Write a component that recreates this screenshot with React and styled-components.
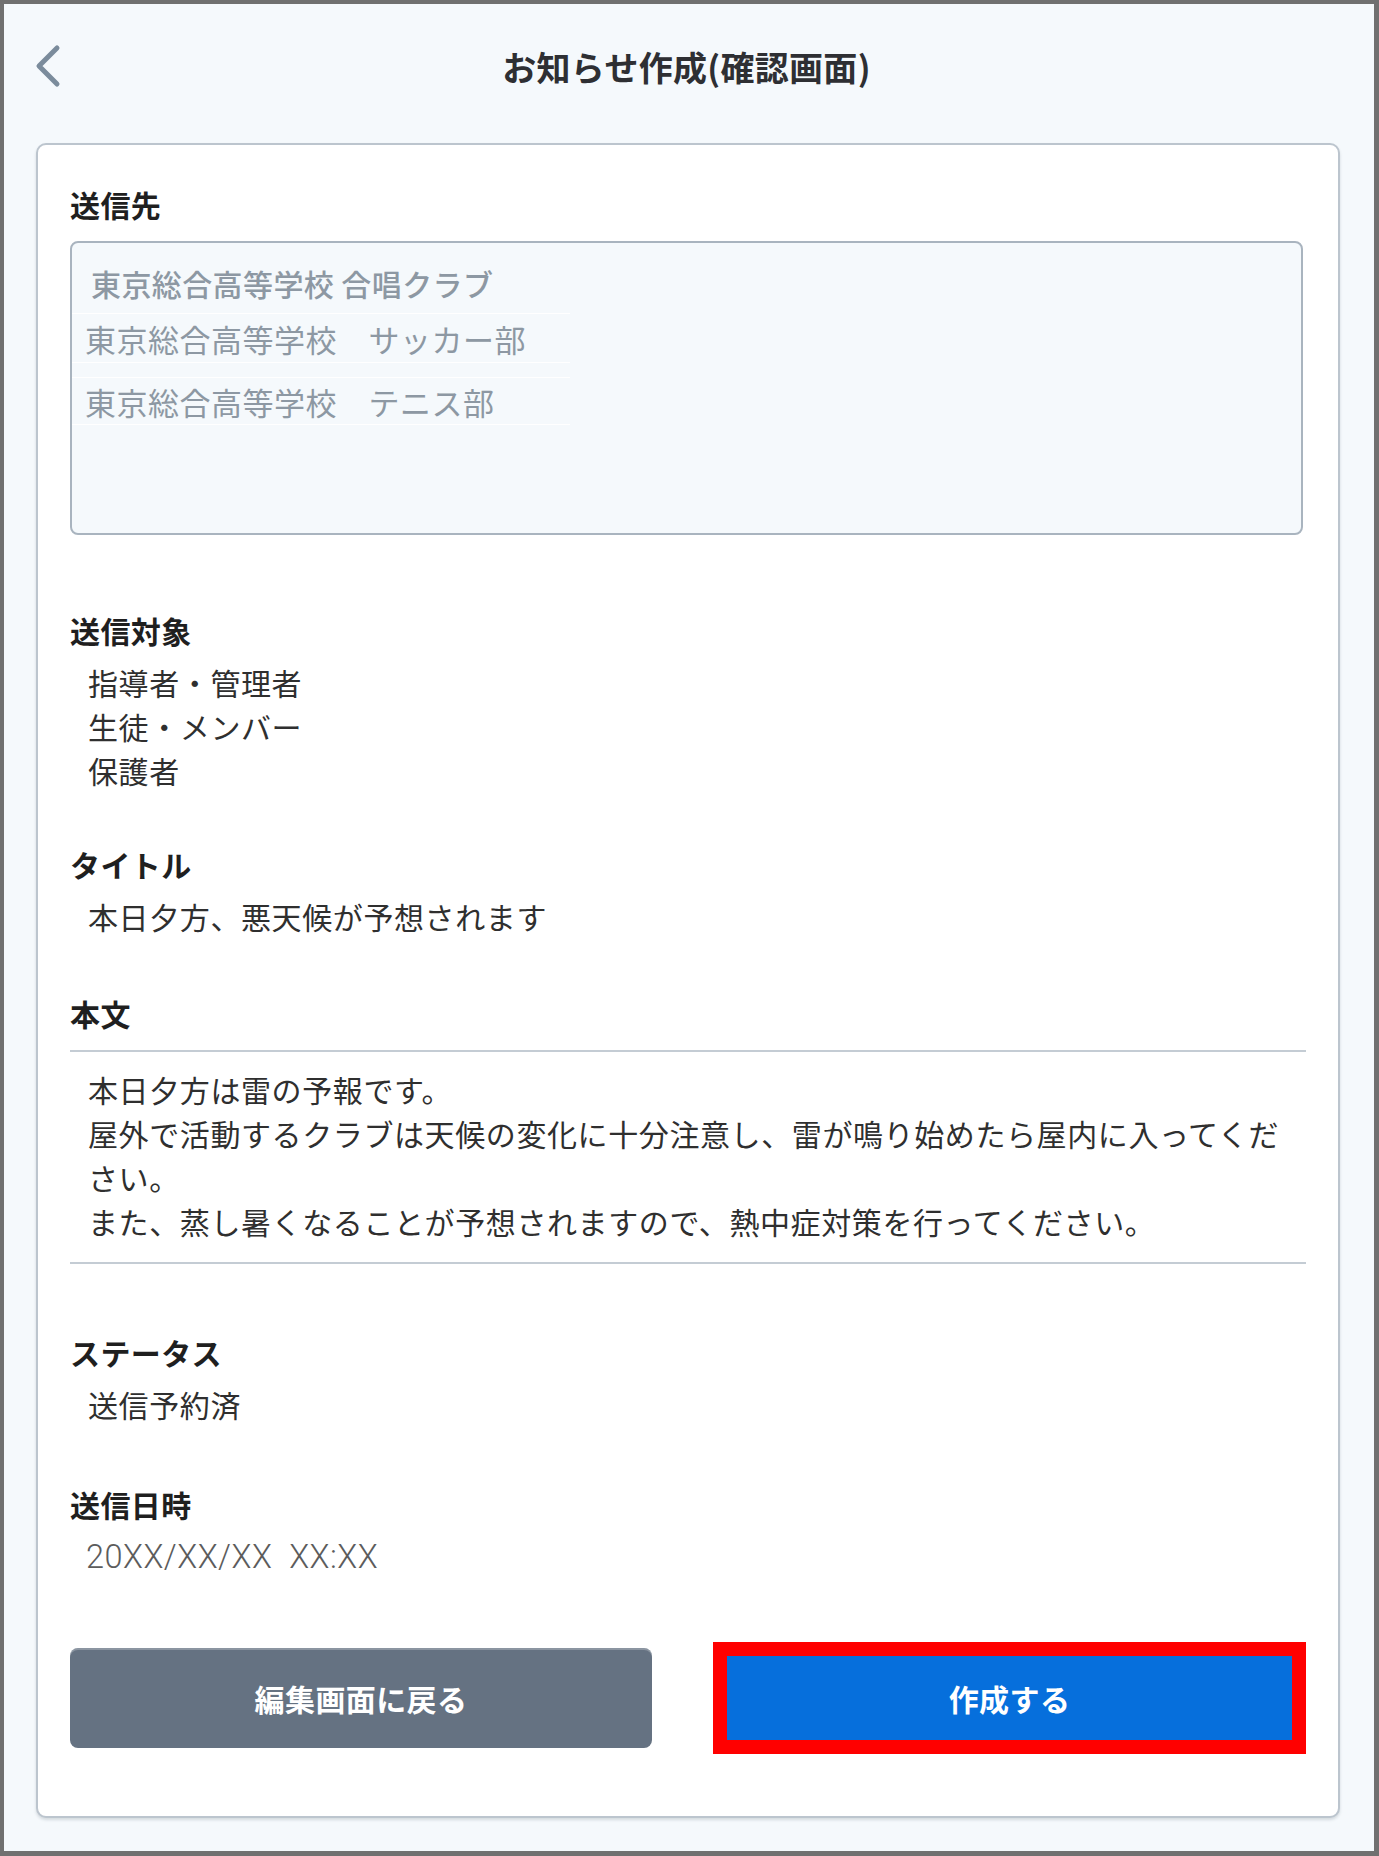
import React from "react";
import styled, { createGlobalStyle } from "styled-components";

const Global = createGlobalStyle`
  * { box-sizing: border-box; }
  html, body { margin: 0; padding: 0; background: #f5f9fc; }
  body {
    font-family: "Noto Sans CJK JP", "Noto Sans", sans-serif;
    color: #333;
  }
`;

const Frame = styled.div`
  width: 1379px;
  height: 1856px;
  border: 4px solid #707070;
  border-right-width: 5px;
  border-bottom-width: 5px;
  background: #f5f9fc;
  padding: 0 34px 0 32px;
  display: flex;
  flex-direction: column;
`;

const Header = styled.header`
  height: 124px;
  display: grid;
  grid-template-columns: 60px 1fr 60px;
  align-items: center;
  margin-left: -3px;
`;

const BackButton = styled.button`
  width: 40px;
  height: 44px;
  padding: 0;
  border: 0;
  background: transparent;
  display: flex;
  align-items: center;
  cursor: pointer;
`;

const Title = styled.h1`
  margin: 0;
  text-align: center;
  font-size: 34px;
  font-weight: 700;
  color: #2e2f33;
  letter-spacing: 0.3px;
`;

const Card = styled.main`
  margin-top: 15px;
  background: #fff;
  border: 2px solid #bcc5ce;
  border-radius: 10px;
  box-shadow: 0 2px 3px rgba(60, 75, 90, 0.18);
  padding: 37px 32px 62px 32px;
  display: flex;
  flex-direction: column;
`;

const Section = styled.section`
  margin-top: ${(p) => p.$gap || 0}px;
  display: flex;
  flex-direction: column;
`;

const Label = styled.h2`
  margin: 0;
  font-size: 30px;
  line-height: 44px;
  font-weight: 700;
  color: #1f1f1f;
  letter-spacing: 0.4px;
`;

const Value = styled.div`
  padding-left: 18px;
  font-size: 30px;
  line-height: 44px;
  letter-spacing: 0.6px;
  color: #2f2f2f;
  margin-top: ${(p) => p.$top ?? 8}px;
  white-space: pre-wrap;
`;

const DateValue = styled(Value)`
  font-family: Roboto, "Noto Sans", sans-serif;
  font-weight: 300;
  font-size: 32.5px;
  color: #5c5c5c;
  padding-left: 16px;
  letter-spacing: 0.5px;
`;

const RecipientBox = styled.div`
  margin-top: 15px;
  margin-right: 3px;
  height: 294px;
  background: #f5f9fc;
  border: 2px solid #a9b4bf;
  border-radius: 8px;
  padding-top: 18px;
  display: flex;
  flex-direction: column;
`;

const RecipientItem = styled.div`
  width: 498px;
  color: #8d98a3;
  display: flex;
  align-items: center;
  white-space: pre;
  margin-top: ${(p) => p.$top || 0}px;
  height: ${(p) => p.$h}px;
  padding-left: ${(p) => (p.$first ? 19 : 13)}px;
  font-size: ${(p) => (p.$first ? 30 : 31)}px;
  letter-spacing: ${(p) => (p.$first ? 0.4 : 0.5)}px;
  font-weight: ${(p) => (p.$first ? 500 : 400)};
  border-top: ${(p) => (p.$first ? "none" : "1px solid #ffffff")};
  border-bottom: ${(p) => (p.$first ? "none" : "1px solid #ffffff")};
`;

const Divider = styled.hr`
  margin: ${(p) => p.$top}px 0 0 0;
  border: 0;
  height: 2px;
  background: #c4ccd4;
`;

const Body = styled.div`
  padding-left: 18px;
  padding-right: 16px;
  margin-top: 15px;
  font-size: 30px;
  line-height: 44px;
  letter-spacing: 0.6px;
  color: #2f2f2f;
`;

const Line = styled.div``;

const ButtonRow = styled.div`
  margin-top: 63px;
  display: flex;
  align-items: center;
  justify-content: space-between;
`;

const BaseButton = styled.button`
  border: 0;
  color: #fff;
  font-family: "Noto Sans CJK JP", "Noto Sans", sans-serif;
  font-size: 30px;
  font-weight: 700;
  letter-spacing: 0.4px;
  cursor: pointer;
  display: flex;
  align-items: center;
  justify-content: center;
`;

const BackEditButton = styled(BaseButton)`
  width: 582px;
  height: 100px;
  background: #657282;
  border-radius: 8px;
  box-shadow: inset 0 2px 0 rgba(255, 255, 255, 0.25);
`;

const Highlight = styled.div`
  border: 14px solid #ff0000;
  width: 593px;
  height: 112px;
`;

const CreateButton = styled(BaseButton)`
  width: 100%;
  height: 100%;
  background: #066fdc;
`;

const ChevronLeft = () => (
  <svg width="30" height="44" viewBox="0 0 30 44" fill="none">
    <path
      d="M24 4 L6 22 L24 40"
      stroke="#7b8c9c"
      strokeWidth="5"
      strokeLinecap="round"
      strokeLinejoin="round"
    />
  </svg>
);

export default function App() {
  return (
    <>
      <Global />
      <Frame>
        <Header>
          <BackButton aria-label="戻る">
            <ChevronLeft />
          </BackButton>
          <Title>お知らせ作成(確認画面)</Title>
          <span />
        </Header>

        <Card>
          <Section>
            <Label>送信先</Label>
            <RecipientBox>
              <RecipientItem $first $h={44}>
                東京総合高等学校 合唱クラブ
              </RecipientItem>
              <RecipientItem $top={8} $h={50}>
                東京総合高等学校　サッカー部
              </RecipientItem>
              <RecipientItem $top={14} $h={48}>
                東京総合高等学校　テニス部
              </RecipientItem>
            </RecipientBox>
          </Section>

          <Section $gap={73}>
            <Label>送信対象</Label>
            <Value>指導者・管理者</Value>
            <Value $top={0}>生徒・メンバー</Value>
            <Value $top={0}>保護者</Value>
          </Section>

          <Section $gap={50}>
            <Label>タイトル</Label>
            <Value>本日夕方、悪天候が予想されます</Value>
          </Section>

          <Section $gap={53}>
            <Label>本文</Label>
            <Divider $top={15} />
            <Body>
              <Line>本日夕方は雷の予報です。</Line>
              <Line>
                屋外で活動するクラブは天候の変化に十分注意し、雷が鳴り始めたら屋内に入ってください。
              </Line>
              <Line>
                また、蒸し暑くなることが予想されますので、熱中症対策を行ってください。
              </Line>
            </Body>
            <Divider $top={19} />
          </Section>

          <Section $gap={66}>
            <Label>ステータス</Label>
            <Value>送信予約済</Value>
          </Section>

          <Section $gap={56}>
            <Label>送信日時</Label>
            <DateValue $top={9}>20XX/XX/XX  XX:XX</DateValue>
          </Section>

          <ButtonRow>
            <BackEditButton>編集画面に戻る</BackEditButton>
            <Highlight>
              <CreateButton>作成する</CreateButton>
            </Highlight>
          </ButtonRow>
        </Card>
      </Frame>
    </>
  );
}
